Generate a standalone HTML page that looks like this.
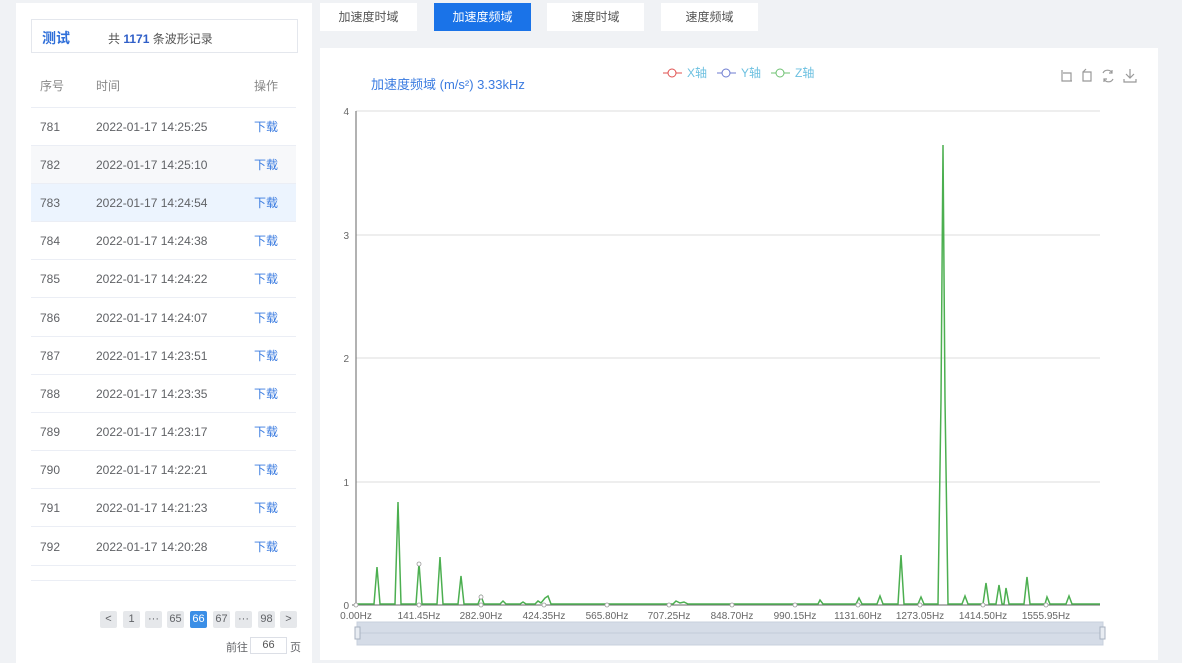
<!DOCTYPE html><html><head><meta charset="utf-8"><style>
*{margin:0;padding:0;box-sizing:border-box}
body{width:1182px;height:657px;background:#f0f2f5;font-family:"Liberation Sans","Noto Sans CJK SC",sans-serif;position:relative;overflow:hidden;font-size:12px;color:#555}
.left{position:absolute;left:16px;top:3px;width:296px;height:660px;background:#fff}
.hdr{position:absolute;left:15px;top:16px;width:267px;height:34px;border:1px solid #e4e7ed;}
.hdr b{position:absolute;left:10px;top:8px;color:#2f6fd9;font-size:14px}
.hdr span{position:absolute;left:76px;top:10px;color:#555;font-size:12px}
.hdr span i{font-style:normal;color:#2f5fc8;font-weight:bold}
.row{position:absolute;left:15px;width:265px;height:38px;border-bottom:1px solid #ebeef5;font-size:12px;color:#606266}
.row div{position:absolute;top:0;line-height:38px;height:38px}
.c1{left:9px}.c2{left:65px}.c3{left:223px;color:#3a7be0}
.th{color:#888;font-weight:normal}
.pg{position:absolute;top:608px;height:17px;background:#e6e8eb;border-radius:2px;font-size:11px;color:#606266;text-align:center;line-height:17px}
.tab{position:absolute;top:3px;height:28px;width:97px;background:#fff;font-size:12px;color:#555;text-align:center;line-height:28px}
.panel{position:absolute;left:320px;top:48px;width:838px;height:612px;background:#fff}
</style></head><body>
<div class="left">
<div class="hdr"><b>测试</b><span>共 <i>1171</i> 条波形记录</span></div>
<div class="row" style="top:62px;height:43px"><div class="c1 th" style="line-height:43px">序号</div><div class="c2 th" style="line-height:43px">时间</div><div class="c3 th" style="line-height:43px;color:#888">操作</div></div>
<div class="row" style="top:105px"><div class="c1">781</div><div class="c2">2022-01-17 14:25:25</div><div class="c3">下载</div></div>
<div class="row" style="top:143px;background:#f7f8fa"><div class="c1">782</div><div class="c2">2022-01-17 14:25:10</div><div class="c3">下载</div></div>
<div class="row" style="top:181px;background:#ecf4fe"><div class="c1">783</div><div class="c2">2022-01-17 14:24:54</div><div class="c3">下载</div></div>
<div class="row" style="top:219px"><div class="c1">784</div><div class="c2">2022-01-17 14:24:38</div><div class="c3">下载</div></div>
<div class="row" style="top:257px"><div class="c1">785</div><div class="c2">2022-01-17 14:24:22</div><div class="c3">下载</div></div>
<div class="row" style="top:296px"><div class="c1">786</div><div class="c2">2022-01-17 14:24:07</div><div class="c3">下载</div></div>
<div class="row" style="top:334px"><div class="c1">787</div><div class="c2">2022-01-17 14:23:51</div><div class="c3">下载</div></div>
<div class="row" style="top:372px"><div class="c1">788</div><div class="c2">2022-01-17 14:23:35</div><div class="c3">下载</div></div>
<div class="row" style="top:410px"><div class="c1">789</div><div class="c2">2022-01-17 14:23:17</div><div class="c3">下载</div></div>
<div class="row" style="top:448px"><div class="c1">790</div><div class="c2">2022-01-17 14:22:21</div><div class="c3">下载</div></div>
<div class="row" style="top:486px"><div class="c1">791</div><div class="c2">2022-01-17 14:21:23</div><div class="c3">下载</div></div>
<div class="row" style="top:525px"><div class="c1">792</div><div class="c2">2022-01-17 14:20:28</div><div class="c3">下载</div></div>
<div class="row" style="top:563px;height:15px"></div>
<div class="pg" style="left:84px;width:17px">&lt;</div>
<div class="pg" style="left:107px;width:17px">1</div>
<div class="pg" style="left:129px;width:17px">···</div>
<div class="pg" style="left:151px;width:17px">65</div>
<div class="pg" style="left:174px;width:17px;background:#3a8ee6;color:#fff">66</div>
<div class="pg" style="left:197px;width:17px">67</div>
<div class="pg" style="left:219px;width:17px">···</div>
<div class="pg" style="left:242px;width:17px">98</div>
<div class="pg" style="left:264px;width:17px">&gt;</div>
<div style="position:absolute;left:210px;top:636px;font-size:11px;color:#606266">前往</div>
<div style="position:absolute;left:234px;top:634px;width:37px;height:17px;border:1px solid #dcdfe6;font-size:11px;text-align:center;line-height:15px">66</div>
<div style="position:absolute;left:274px;top:636px;font-size:11px;color:#606266">页</div>
</div>
<div class="tab" style="left:320px">加速度时域</div>
<div class="tab" style="left:434px;background:#1a73e8;color:#fff">加速度频域</div>
<div class="tab" style="left:547px">速度时域</div>
<div class="tab" style="left:661px">速度频域</div>
<div class="panel"></div>
<svg style="position:absolute;left:0;top:0" width="1182" height="657" font-family="Liberation Sans, Noto Sans CJK SC, sans-serif">
<text x="371" y="89" font-size="13" fill="#3a7be0">加速度频域 (m/s²) 3.33kHz</text>
<g font-size="12"><line x1="663" y1="73" x2="682" y2="73" stroke="#e0504f"/><circle cx="672" cy="73" r="4" fill="#fff" stroke="#e0504f"/><text x="687" y="77" fill="#6cc0e0">X轴</text>
<line x1="717" y1="73" x2="736" y2="73" stroke="#6c7bd0"/><circle cx="726" cy="73" r="4" fill="#fff" stroke="#6c7bd0"/><text x="741" y="77" fill="#6cc0e0">Y轴</text>
<line x1="771" y1="73" x2="790" y2="73" stroke="#6cc070"/><circle cx="780" cy="73" r="4" fill="#fff" stroke="#6cc070"/><text x="795" y="77" fill="#6cc0e0">Z轴</text></g>
<g stroke="#999" fill="none" stroke-width="1.2"><path d="M1062 70v11h10M1063 73h8v8"/><path d="M1083 72h8v9h-8zM1083 72l3-3"/><path d="M1103 73a5 5 0 0 1 9 0M1113 79a5 5 0 0 1-9 0M1112 70v3h-3M1104 82v-3h3"/><path d="M1130 69v9M1126 74l4 4 4-4M1124 79v3h12v-3"/></g>
<g stroke="#ddd"><line x1="356" y1="111" x2="1100" y2="111"/><line x1="356" y1="235" x2="1100" y2="235"/><line x1="356" y1="358" x2="1100" y2="358"/><line x1="356" y1="482" x2="1100" y2="482"/></g>
<line x1="356" y1="111" x2="356" y2="605" stroke="#666"/><line x1="352" y1="605" x2="1100" y2="605" stroke="#666"/>
<g font-size="10" fill="#666" text-anchor="end"><text x="349" y="115">4</text><text x="349" y="239">3</text><text x="349" y="362">2</text><text x="349" y="486">1</text><text x="349" y="609">0</text></g>
<g font-size="10" fill="#666" text-anchor="middle"><text x="356" y="619">0.00Hz</text><text x="419" y="619">141.45Hz</text><text x="481" y="619">282.90Hz</text><text x="544" y="619">424.35Hz</text><text x="607" y="619">565.80Hz</text><text x="669" y="619">707.25Hz</text><text x="732" y="619">848.70Hz</text><text x="795" y="619">990.15Hz</text><text x="858" y="619">1131.60Hz</text><text x="920" y="619">1273.05Hz</text><text x="983" y="619">1414.50Hz</text><text x="1046" y="619">1555.95Hz</text></g>
<polyline fill="none" stroke="#4caf50" stroke-width="1.5" points="356,604 374,604 377,567 380,604 395,604 398,502 401,604 416,604 419,563 422,604 437,604 440,557 443,604 458,604 461,576 464,604 478,604 481,596 484,604 500,604 503,601 506,604 520,604 523,602 526,604 535,604 538,601 541,603 545,598 548,596 551,604 600,604 673,604 676,601 680,603 684,602 688,604 780,604 818,604 820,600 823,604 856,604 859,598 862,604 877,604 880,596 883,604 898,604 901,555 904,604 918,604 921,597 924,604 938,604 941,400 943,145 945,400 948,604 962,604 965,596 968,604 983,604 986,583 989,604 996,604 999,585 1002,604 1004,604 1006,588 1009,604 1024,604 1027,577 1030,604 1045,604 1047,597 1050,604 1066,604 1069,596 1072,604 1100,604"/>
<g fill="#fff" stroke="#999" stroke-width="0.8"><circle cx="356" cy="605" r="2"/><circle cx="419" cy="605" r="2"/><circle cx="419" cy="564" r="2"/><circle cx="481" cy="605" r="2"/><circle cx="481" cy="597" r="2"/><circle cx="544" cy="605" r="2"/><circle cx="607" cy="605" r="2"/><circle cx="669" cy="605" r="2"/><circle cx="732" cy="605" r="2"/><circle cx="795" cy="605" r="2"/><circle cx="858" cy="605" r="2"/><circle cx="920" cy="605" r="2"/><circle cx="983" cy="605" r="2"/><circle cx="1046" cy="605" r="2"/></g>
<rect x="357" y="622" width="746" height="23" fill="#d5dce7" stroke="#c8d0dc"/>
<line x1="357" y1="633" x2="1103" y2="633" stroke="#c2cbd8"/>
<rect x="355" y="627" width="5" height="12" fill="#e8ecf2" stroke="#a8b2c0"/><rect x="1100" y="627" width="5" height="12" fill="#e8ecf2" stroke="#a8b2c0"/>
</svg>
</body></html>
